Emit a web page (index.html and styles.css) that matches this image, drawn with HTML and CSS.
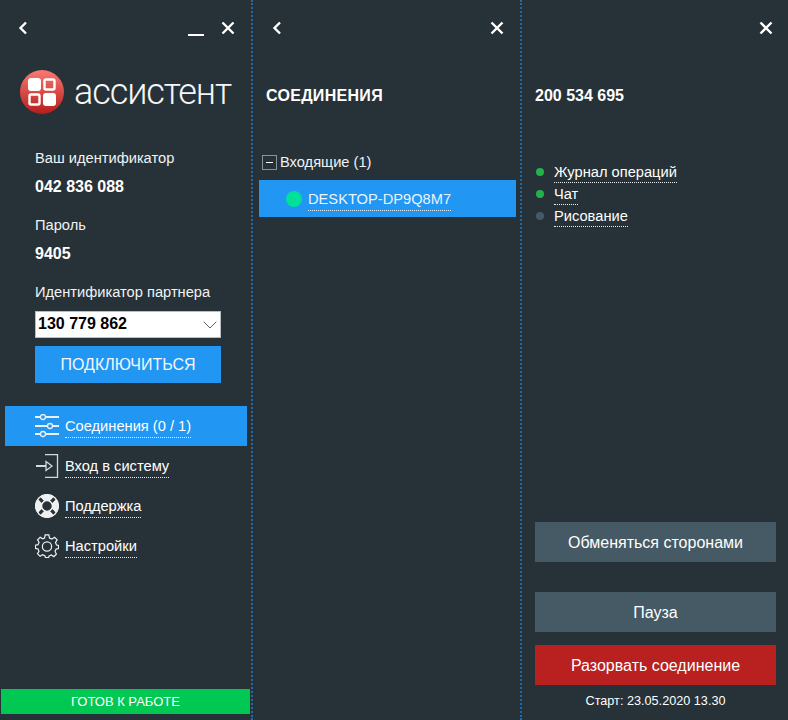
FILE: index.html
```html
<!DOCTYPE html>
<html lang="ru">
<head>
  <meta charset="UTF-8" />
  <title>Ассистент</title>
  <link rel="stylesheet" href="styles.css">
</head>
<body>

<div class="app">

  <!-- main panel -->
  <div class="panel panel-main">
    <div class="topbar">
      <svg class="ico-back" viewBox="0 0 10 14"><path d="M8 1.500 2.500 7 8 12.500" /></svg>
      <span class="ico-min"></span>
      <svg class="ico-close" viewBox="0 0 14 14"><path d="M1.500 1.500 12.500 12.500M12.500 1.500 1.500 12.500" /></svg>
    </div>

    <div class="logo">
      <svg class="logo-mark" viewBox="0 0 44 44">
        <defs>
          <linearGradient id="logoFill" x1="0" y1="0" x2="0" y2="1">
            <stop offset="0" stop-color="#f97a72" />
            <stop offset="1" stop-color="#b71c1c" />
          </linearGradient>
        </defs>
        <circle cx="22" cy="22" r="22" fill="url(#logoFill)" />
        <rect x="8" y="8" width="13" height="13" rx="3" fill="#fff" />
        <rect x="24.500" y="9.500" width="10" height="10" rx="1.500" fill="none" stroke="#fff" stroke-width="2.400" />
        <rect x="9.500" y="24.500" width="10" height="10" rx="1.500" fill="none" stroke="#fff" stroke-width="2.400" />
        <rect x="23" y="23" width="13" height="13" rx="3" fill="#fff" />
      </svg>
      <span class="logo-text">ассистент</span>
    </div>

    <div class="field-label first">Ваш идентификатор</div>
    <div class="field-value">042 836 088</div>
    <div class="field-label">Пароль</div>
    <div class="field-value">9405</div>
    <div class="field-label">Идентификатор партнера</div>

    <div class="partner-select">
      <span>130 779 862</span>
      <svg viewBox="0 0 14 8"><path d="M.7.7 7 7 13.300.7" /></svg>
    </div>
    <div class="btn-connect">ПОДКЛЮЧИТЬСЯ</div>

    <div class="nav">
      <div class="nav-item active">
        <svg class="nav-ico" viewBox="0 0 24 24">
          <path class="thick" d="M0 3H5.500M10.500 3H24M0 12H12.500M17.500 12H24M0 20H5.500M10.500 20H24" />
          <circle cx="8" cy="3" r="2.500" />
          <circle cx="15" cy="12" r="2.500" />
          <circle cx="8" cy="20" r="2.500" />
        </svg>
        <span class="dotted">Соединения (0 / 1)</span>
      </div>
      <div class="nav-item">
        <svg class="nav-ico muted" viewBox="0 0 24 24">
          <path d="M10 .5H22.500V23.500H10" />
          <path class="thick" d="M1 12H11" />
          <path d="M11 7.500 17 12 11 16.500Z" />
        </svg>
        <span class="dotted">Вход в систему</span>
      </div>
      <div class="nav-item">
        <svg class="nav-ico" viewBox="0 0 24 24">
          <circle class="buoy-body" cx="12" cy="12" r="8.500" />
          <path class="buoy-cuts" d="M7.800 7.800 4.200 4.200M16.200 7.800 19.800 4.200M7.800 16.200 4.200 19.800M16.200 16.200 19.800 19.800" />
          <circle cx="12" cy="12" r="11.400" />
          <circle cx="12" cy="12" r="5.400" />
        </svg>
        <span class="dotted">Поддержка</span>
      </div>
      <div class="nav-item">
        <svg class="nav-ico" viewBox="0 0 26 26">
          <path d="M11 1H15L15.700 4.300 18.300 5.400 21.200 3.600 24 6.400 22.200 9.300 23.300 11.900 25.500 12.300V15.700L22.800 16.300 21.700 18.900 23.200 21.700 20.400 24.500 17.700 22.800 15.300 23.800 14.700 25.500H11.300L10.700 23.500 8.100 22.500 5.500 24.200 2.700 21.400 4.300 18.800 3.300 16.200.5 15.600V12.200L3.300 11.600 4.400 9 2.800 6.300 5.600 3.500 8.300 5.200 10.400 4.300Z" />
          <circle cx="13" cy="13.500" r="5" />
        </svg>
        <span class="dotted">Настройки</span>
      </div>
    </div>

    <div class="status-bar">ГОТОВ К РАБОТЕ</div>
  </div>

  <!-- connections -->
  <div class="panel panel-list">
    <div class="topbar">
      <svg class="ico-back" viewBox="0 0 10 14"><path d="M8 1.500 2.500 7 8 12.500" /></svg>
      <svg class="ico-close" viewBox="0 0 14 14"><path d="M1.500 1.500 12.500 12.500M12.500 1.500 1.500 12.500" /></svg>
    </div>
    <div class="panel-title list-title">СОЕДИНЕНИЯ</div>
    <div class="tree-head">
      <span class="tree-toggle"></span>
      <span>Входящие (1)</span>
    </div>
    <div class="tree-row">
      <span class="tree-dot"></span>
      <span class="dotted">DESKTOP-DP9Q8M7</span>
    </div>
  </div>

  <!-- session -->
  <div class="panel panel-session">
    <div class="topbar">
      <svg class="ico-close" viewBox="0 0 14 14"><path d="M1.500 1.500 12.500 12.500M12.500 1.500 1.500 12.500" /></svg>
    </div>
    <div class="panel-title">200 534 695</div>
    <div class="features">
      <div class="feature"><span class="feature-dot on"></span><span class="dotted">Журнал операций</span></div>
      <div class="feature"><span class="feature-dot on"></span><span class="dotted">Чат</span></div>
      <div class="feature"><span class="feature-dot"></span><span class="dotted">Рисование</span></div>
    </div>
    <div class="actions">
      <div class="btn btn-swap">Обменяться сторонами</div>
      <div class="btn btn-pause">Пауза</div>
      <div class="btn btn-stop">Разорвать соединение</div>
      <div class="started">Старт: 23.05.2020 13.30</div>
    </div>
  </div>

</div>

</body>
</html>
```

FILE: styles.css
```css
* {
  box-sizing: border-box;
}

body {
  margin: 0;
  background: #273238;
  color: #fff;
  font-family: "Liberation Sans", Arial, sans-serif;
  font-size: 14.67px;
}

.app {
  display: grid;
  grid-template-columns: 253px 269px 1fr;
  width: 788px;
  height: 720px;
  overflow: hidden;
}

.panel {
  display: flex;
  flex-direction: column;
  height: 720px;
  border-right: 2px dotted #1f6aa8;
}

.panel-session {
  border-right: none;
}

.dotted {
  padding: 3px 0;
  border-bottom: 1px dotted #e8eef2;
}

/* top buttons */
.topbar {
  display: flex;
  align-items: flex-start;
  justify-content: flex-end;
  height: 56px;
  padding-top: 21px;
}

.topbar svg {
  flex: none;
  fill: none;
  stroke: #fff;
  stroke-width: 2.400;
}

.ico-back {
  width: 10px;
  height: 14px;
  margin-right: auto;
}

.ico-close {
  width: 14px;
  height: 14px;
}

.ico-min {
  width: 16px;
  height: 2px;
  margin: 13px 17px 0 0;
  background: #fff;
}

.panel-main .topbar {
  padding-left: 18px;
  padding-right: 16px;
}

.panel-list .topbar {
  padding-left: 19px;
  padding-right: 16px;
}

.panel-session .topbar {
  padding-right: 15px;
}

/* logo */
.logo {
  display: flex;
  align-items: center;
  margin: 14px 0 0 20px;
  height: 44px;
}

.logo-mark {
  width: 44px;
  height: 44px;
  flex: none;
}

.logo-text {
  margin-left: 10px;
  font-family: Roboto, sans-serif;
  font-size: 36px;
  font-weight: 300;
  line-height: 44px;
  letter-spacing: -1.100px;
  color: #f4f6f7;
}

/* id fields */
.field-label {
  margin: 17px 0 0 35px;
  height: 16px;
  line-height: 16px;
  color: #f0f3f4;
}

.field-label.first {
  margin-top: 36px;
}

.field-value {
  margin: 13px 0 0 35px;
  height: 16px;
  line-height: 16px;
  font-size: 16px;
  font-weight: bold;
}

.field-label + .field-value + .field-label {
  margin-top: 22px;
}

.partner-select {
  display: flex;
  align-items: center;
  justify-content: space-between;
  width: 186px;
  height: 27px;
  margin: 11px 0 0 35px;
  padding: 0 3px 1px 2px;
  background: #fff;
  border: 1px solid #b8bdc0;
  color: #000;
  font-size: 16px;
  font-weight: bold;
}

.partner-select svg {
  width: 14px;
  height: 8px;
  margin-top: 1px;
  fill: none;
  stroke: #5d6468;
  stroke-width: 1;
}

.btn-connect {
  width: 186px;
  height: 37px;
  margin: 8px 0 0 35px;
  background: #2196f3;
  color: #f3f8fd;
  font-size: 16px;
  line-height: 37px;
  text-align: center;
}

/* menu */
.nav {
  margin: 23px 4px 0 5px;
}

.nav-item {
  display: flex;
  align-items: center;
  height: 40px;
  padding-left: 30px;
}

.nav-item.active {
  background: #2196f3;
}

.nav-ico {
  flex: none;
  width: 24px;
  height: 24px;
  margin-right: 6px;
  fill: none;
  stroke: #eef1f2;
  stroke-width: 1.300;
}

.nav-ico.muted {
  stroke: #d3d8da;
}

.nav-ico .thick {
  stroke-width: 2;
}

.buoy-body {
  stroke-width: 6.500;
}

.buoy-cuts {
  stroke: #273238;
  stroke-width: 3.200;
}

.status-bar {
  height: 25px;
  margin: auto 0 6px 1px;
  width: 249px;
  background: #00c853;
  font-size: 13px;
  line-height: 25px;
  text-align: center;
}

/* connections list */
.panel-title {
  height: 20px;
  margin-top: 30px;
  font-size: 16px;
  font-weight: bold;
  line-height: 20px;
}

.list-title {
  margin-left: 13px;
  letter-spacing: 0.300px;
}

.panel-session .panel-title {
  margin-left: 13px;
}

.tree-head {
  display: flex;
  align-items: center;
  height: 16px;
  margin: 48px 0 0 9px;
  color: #f0f3f4;
}

.tree-toggle {
  position: relative;
  width: 15px;
  height: 15px;
  margin-right: 3px;
  border: 1px solid #8b9296;
}

.tree-toggle::after {
  content: "";
  position: absolute;
  left: 3px;
  top: 6px;
  width: 7px;
  height: 1px;
  background: #fff;
}

.tree-row {
  display: flex;
  align-items: center;
  height: 37px;
  margin: 10px 4px 0 6px;
  padding: 1px 0 0 27px;
  background: #2196f3;
  color: #eaf4fd;
}

.tree-dot {
  width: 16px;
  height: 16px;
  margin-right: 6px;
  border-radius: 50%;
  background: #00e09a;
}

/* session */
.features {
  margin: 55px 0 0 14px;
}

.feature {
  display: flex;
  align-items: center;
  height: 22px;
}

.feature .dotted {
  padding: 2px 0;
}

.feature-dot {
  width: 8px;
  height: 8px;
  margin-right: 10px;
  border-radius: 50%;
  background: #455a64;
}

.feature-dot.on {
  background: #22b14c;
}

.actions {
  display: flex;
  flex-direction: column;
  margin: auto 12px 0 13px;
  padding-bottom: 12px;
}

.btn {
  height: 40px;
  font-size: 16px;
  line-height: 41px;
  background: #455a64;
  text-align: center;
}

.btn-pause {
  margin-top: 30px;
}

.btn-stop {
  margin-top: 13px;
  background: #b92020;
}

.started {
  height: 14px;
  margin-top: 9px;
  font-size: 12.67px;
  line-height: 14px;
  text-align: center;
}
```
